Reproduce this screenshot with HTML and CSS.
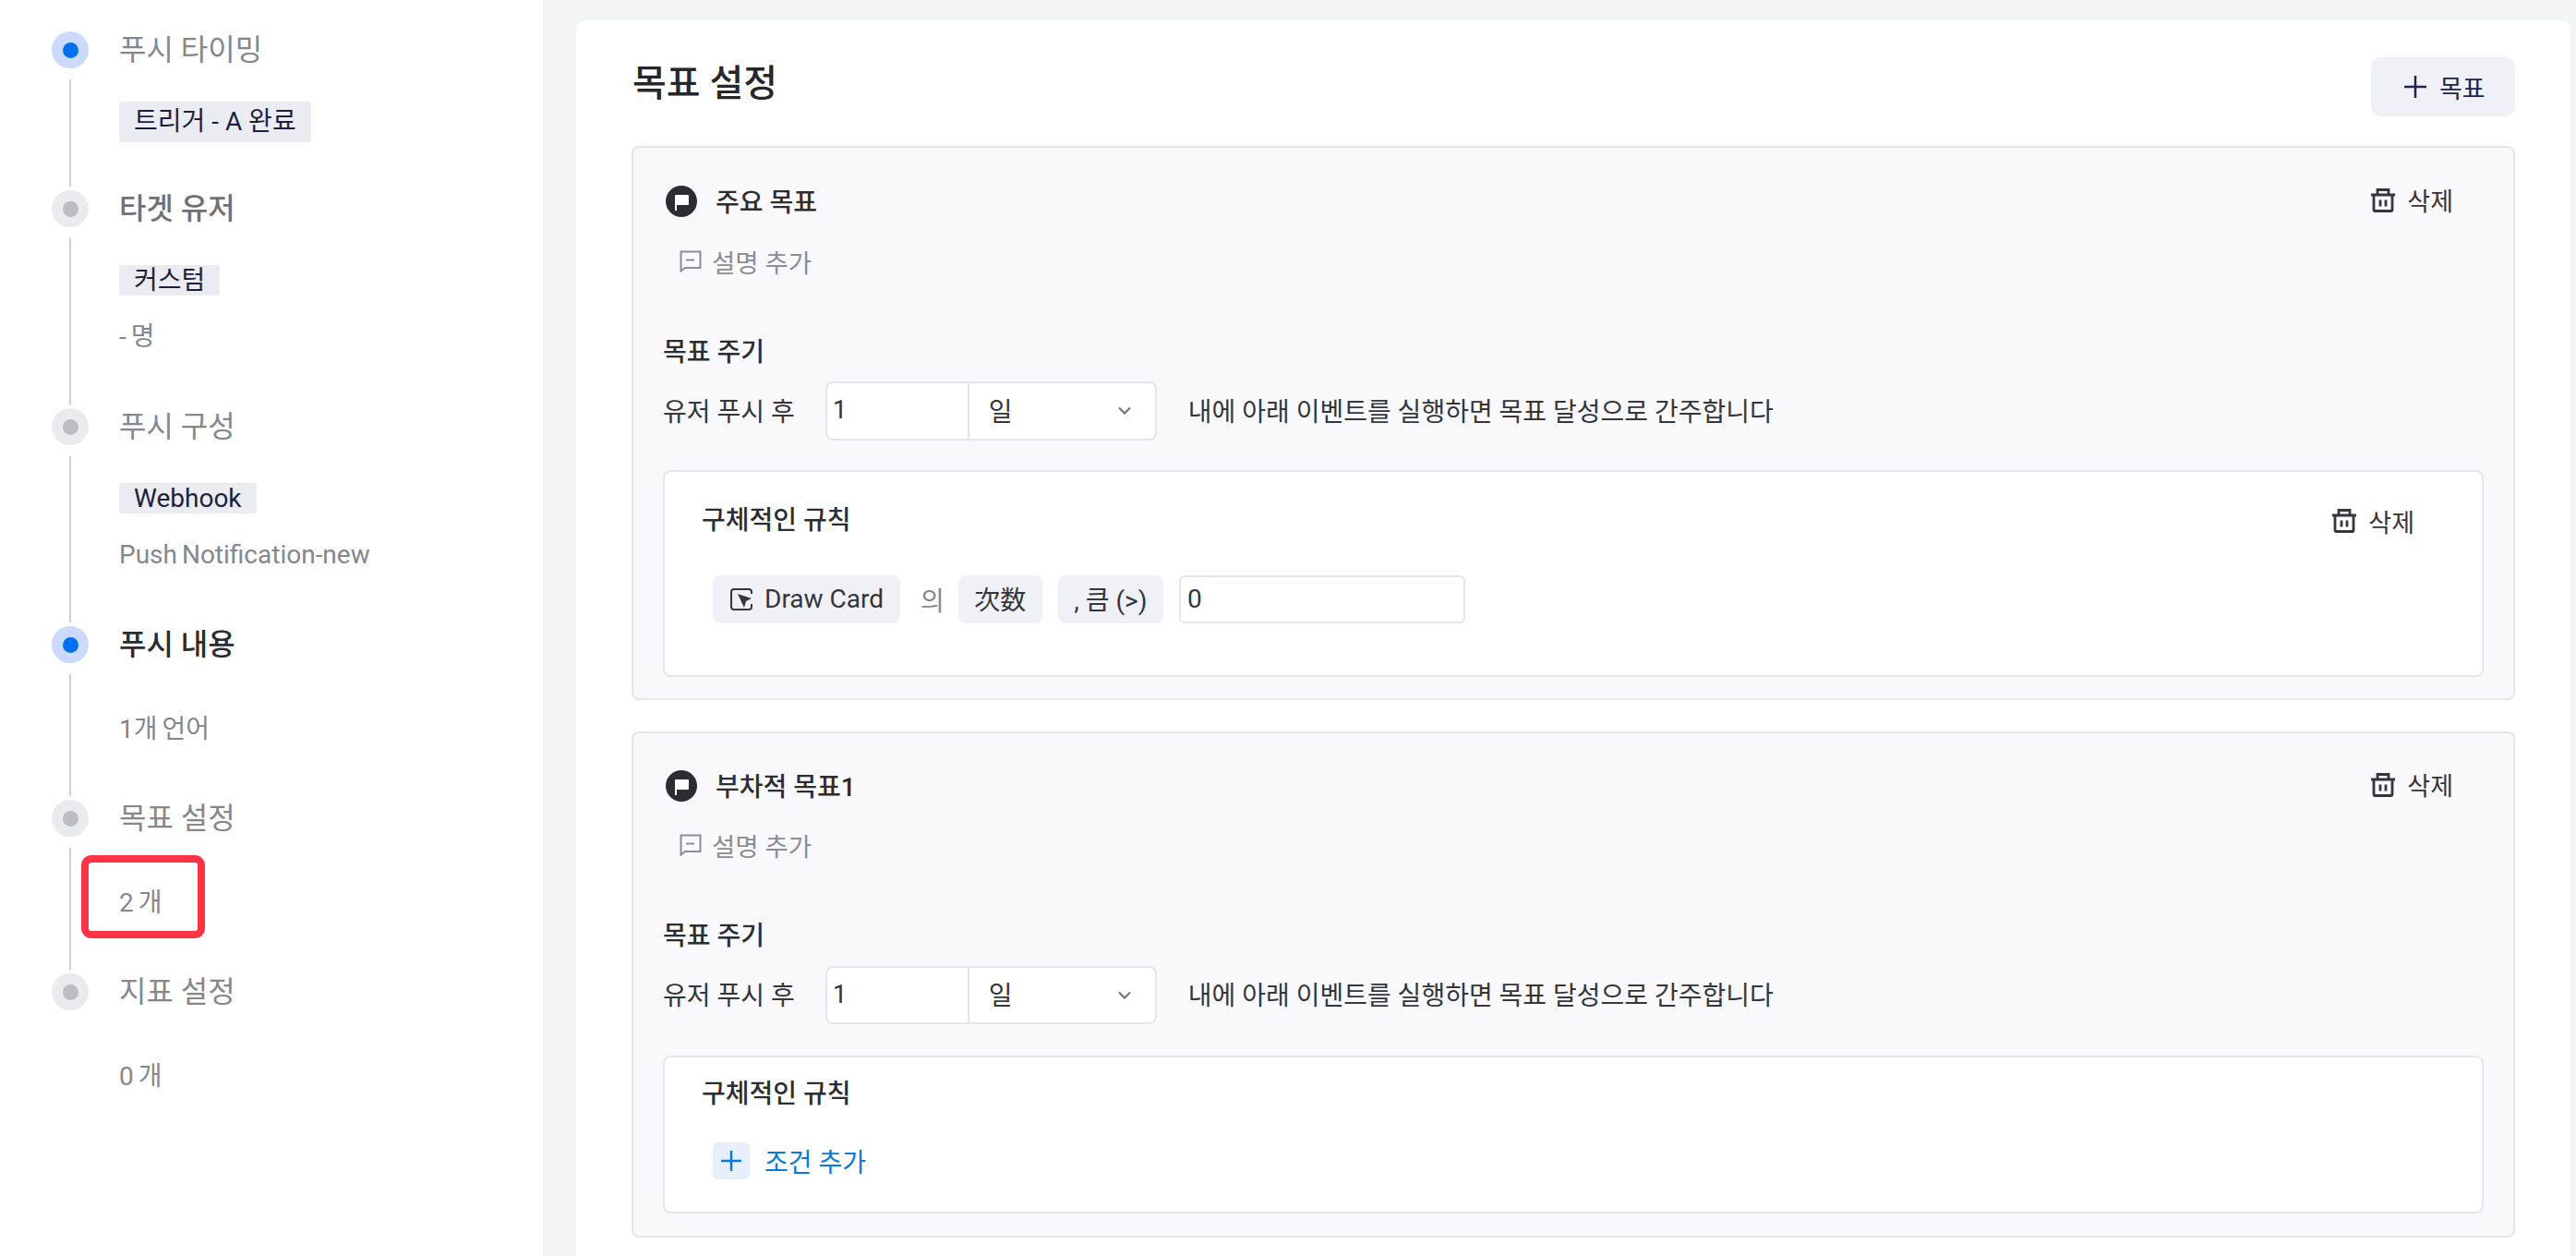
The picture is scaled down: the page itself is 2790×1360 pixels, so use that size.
FILE: index.html
```html
<!DOCTYPE html>
<html lang="ko">
<head>
    <meta charset="UTF-8">
    <title>목표 설정</title>
    <link rel="stylesheet" href="styles.css">
</head>
<body>
    <svg class="icon-defs" width="0" height="0">
        <symbol id="i-flag" viewBox="0 0 34 34">
            <circle cx="17" cy="17" r="17" fill="#2b2d33"/>
            <path d="M10 11q0-1 1-1h13q1 0 1 1v9q0 1-1 1H12v6h-2z" fill="#fff"/>
        </symbol>
        <symbol id="i-comment" viewBox="0 0 24 24">
            <path d="M1.500 1.500h21v17.500H6l-4.500 3.500z" fill="none" stroke="#8b8d93" stroke-width="2"/>
            <path d="M7 10.500h9" fill="none" stroke="#8b8d93" stroke-width="2"/>
        </symbol>
        <symbol id="i-trash" viewBox="0 0 26 26">
            <path d="M0 7h26M7 7V1.500h12V7M3 7v16.500a1 1 0 0 0 1 1h18a1 1 0 0 0 1-1V7M10 12.500v7M16 12.500v7" fill="none" stroke="#34363b" stroke-width="2.800"/>
        </symbol>
        <symbol id="i-chevron" viewBox="0 0 14 10">
            <path d="M1 1.500l6 6 6-6" fill="none" stroke="#6e7076" stroke-width="2"/>
        </symbol>
        <symbol id="i-event" viewBox="0 0 24 24">
            <path d="M23 6V4a3 3 0 0 0-3-3H4a3 3 0 0 0-3 3v16a3 3 0 0 0 3 3h16a3 3 0 0 0 3-3v-3" fill="none" stroke="#34363b" stroke-width="2"/>
            <path d="M8 6l15 5-6 3-2 7z" fill="#34363b"/>
        </symbol>
    </svg>

    <div class="app">
        <aside class="sidebar">
            <div class="step step-first">
                <div class="rail"><span class="dot dot-on"></span><span class="rail-line"></span></div>
                <div>
                    <div class="step-title">푸시 타이밍</div>
                    <span class="tag tag-big">트리거 - A 완료</span>
                </div>
            </div>
            <div class="step step-tall">
                <div class="rail"><span class="dot"></span><span class="rail-line"></span></div>
                <div>
                    <div class="step-title step-title-mid">타겟 유저</div>
                    <span class="tag">커스텀</span>
                    <div class="step-note">- 명</div>
                </div>
            </div>
            <div class="step step-tall">
                <div class="rail"><span class="dot"></span><span class="rail-line"></span></div>
                <div>
                    <div class="step-title">푸시 구성</div>
                    <span class="tag">Webhook</span>
                    <div class="step-note">Push Notification-new</div>
                </div>
            </div>
            <div class="step step-short">
                <div class="rail"><span class="dot dot-on"></span><span class="rail-line"></span></div>
                <div>
                    <div class="step-title step-title-on">푸시 내용</div>
                    <div class="step-note step-note-only">1개 언어</div>
                </div>
            </div>
            <div class="step step-short">
                <div class="rail"><span class="dot"></span><span class="rail-line"></span></div>
                <div>
                    <div class="step-title">목표 설정</div>
                    <div class="step-note step-note-only">2 개</div>
                </div>
            </div>
            <div class="step step-short">
                <div class="rail"><span class="dot"></span></div>
                <div>
                    <div class="step-title">지표 설정</div>
                    <div class="step-note step-note-only">0 개</div>
                </div>
            </div>
        </aside>

        <main class="main">
            <section class="panel">
                <header class="panel-head">
                    <h1 class="panel-title">목표 설정</h1>
                    <button class="add-btn">
                        <svg class="add-plus" viewBox="0 0 24 24"><path d="M0 12h24M12 0v24" fill="none" stroke="#22234a" stroke-width="2.500"/></svg>
                        목표
                    </button>
                </header>

                <div class="goal">
                    <div class="goal-head">
                        <div class="goal-name"><svg class="icon-flag"><use href="#i-flag"/></svg>주요 목표</div>
                        <div class="del"><svg class="icon-trash"><use href="#i-trash"/></svg>삭제</div>
                    </div>
                    <div class="goal-desc"><svg class="icon-comment"><use href="#i-comment"/></svg>설명 추가</div>
                    <div class="label">목표 주기</div>
                    <div class="period">
                        <span>유저 푸시 후</span>
                        <div class="period-group">
                            <input class="period-input" type="text" value="1">
                            <div class="period-select"><span>일</span><svg class="icon-chevron"><use href="#i-chevron"/></svg></div>
                        </div>
                        <span>내에 아래 이벤트를 실행하면 목표 달성으로 간주합니다</span>
                    </div>
                    <div class="rule">
                        <div class="rule-head">
                            <div class="label">구체적인 규칙</div>
                            <div class="del del-rule"><svg class="icon-trash"><use href="#i-trash"/></svg>삭제</div>
                        </div>
                        <div class="rule-row">
                            <span class="pill pill-event"><svg class="icon-event"><use href="#i-event"/></svg>Draw Card</span>
                            <span class="rule-of">의</span>
                            <span class="pill">次数</span>
                            <span class="pill">, 큼 (&gt;)</span>
                            <input class="rule-input" type="text" value="0">
                        </div>
                    </div>
                </div>

                <div class="goal goal-extra">
                    <div class="goal-head">
                        <div class="goal-name"><svg class="icon-flag"><use href="#i-flag"/></svg>부차적 목표1</div>
                        <div class="del"><svg class="icon-trash"><use href="#i-trash"/></svg>삭제</div>
                    </div>
                    <div class="goal-desc"><svg class="icon-comment"><use href="#i-comment"/></svg>설명 추가</div>
                    <div class="label">목표 주기</div>
                    <div class="period">
                        <span>유저 푸시 후</span>
                        <div class="period-group">
                            <input class="period-input" type="text" value="1">
                            <div class="period-select"><span>일</span><svg class="icon-chevron"><use href="#i-chevron"/></svg></div>
                        </div>
                        <span>내에 아래 이벤트를 실행하면 목표 달성으로 간주합니다</span>
                    </div>
                    <div class="rule">
                        <div class="rule-head">
                            <div class="label">구체적인 규칙</div>
                        </div>
                        <div class="rule-add">
                            <span class="rule-add-box"><svg class="rule-add-plus" viewBox="0 0 22 22"><path d="M0 11h22M11 0v22" fill="none" stroke="#0b79d8" stroke-width="2.500"/></svg></span>
                            조건 추가
                        </div>
                    </div>
                </div>
            </section>
        </main>
    </div>

    <div class="callout"></div>
</body>
</html>
```

FILE: styles.css
```css
* {
    box-sizing: border-box;
}
body {
    margin: 0;
    height: 1360px;
    overflow: hidden;
    background: #f3f4f6;
    color: #34363b;
    font-family: Roboto, "Noto Sans CJK KR", sans-serif;
    font-size: 28px;
}
.icon-defs {
    position: absolute;
}
.app {
    display: flex;
    height: 1360px;
}

/* sidebar */
.sidebar {
    flex: 0 0 588px;
    background: #fff;
    padding: 34px 0 0 56px;
}
.step {
    display: flex;
    gap: 33px;
}
.step-first {
    height: 172px;
}
.step-tall {
    height: 236px;
}
.step-short {
    height: 188px;
}
.rail {
    display: flex;
    flex-direction: column;
    align-items: center;
    flex: 0 0 40px;
}
.dot {
    display: flex;
    align-items: center;
    justify-content: center;
    flex: 0 0 40px;
    width: 40px;
    border-radius: 50%;
    background: #eaebef;
}
.dot::after {
    content: "";
    width: 17px;
    height: 17px;
    border-radius: 50%;
    background: #bcbdc2;
}
.dot-on {
    background: #cbd9fb;
}
.dot-on::after {
    background: #0070f3;
}
.rail-line {
    flex: 1;
    width: 2px;
    margin: 12px 0 4px;
    background: #cfd0d3;
}
.step-title {
    height: 40px;
    line-height: 40px;
    font-size: 32px;
    color: #85878c;
}
.step-title-mid {
    font-weight: 500;
    color: #6f7175;
}
.step-title-on {
    font-weight: 500;
    color: #2c2d31;
}
.tag {
    display: inline-block;
    height: 33px;
    line-height: 33px;
    margin-top: 41px;
    padding: 0 16px;
    border-radius: 3px;
    background: #ebecf1;
    color: #1e1f40;
}
.tag-big {
    height: 44px;
    line-height: 44px;
    margin-top: 36px;
}
.step-note {
    height: 40px;
    line-height: 40px;
    margin-top: 25px;
    color: #85878c;
    word-spacing: -2px;
}
.step-note-only {
    margin-top: 52px;
}

/* main panel */
.main {
    flex: 1;
    padding: 22px 6px 0 36px;
}
.panel {
    height: 100%;
    padding: 40px 60px 0;
    border-radius: 10px 10px 0 0;
    background: #fff;
}
.panel-head {
    display: flex;
    justify-content: space-between;
    align-items: flex-start;
    height: 64px;
}
.panel-title {
    margin: 9px 0 0 1px;
    font-size: 40px;
    line-height: 40px;
    font-weight: 500;
    color: #26272b;
}
.add-btn {
    display: flex;
    align-items: center;
    gap: 14px;
    height: 64px;
    width: 156px;
    padding: 0 0 0 36px;
    border: none;
    border-radius: 10px;
    background: #f0f1f7;
    color: #22234a;
    font: inherit;
    font-size: 27px;
}
.add-plus {
    width: 24px;
    height: 24px;
}

.goal {
    height: 600px;
    margin-top: 32px;
    padding: 38px 32px 0;
    border: 2px solid #e5e6ea;
    border-radius: 8px;
    background: #f9f9fb;
}
.goal-extra {
    height: 548px;
    margin-top: 34px;
    padding-top: 37px;
}
.goal-head {
    display: flex;
    justify-content: space-between;
    align-items: center;
    height: 40px;
    padding: 0 33px 3px 3px;
}
.goal-name {
    display: flex;
    align-items: center;
    gap: 20px;
    font-weight: 500;
    color: #2c2d31;
}
.icon-flag {
    width: 34px;
    height: 34px;
    margin-top: 3px;
}
.del {
    display: flex;
    align-items: center;
    gap: 13px;
    font-size: 27px;
}
.del-rule {
    margin-right: 40px;
}
.icon-trash {
    width: 26px;
    height: 26px;
}
.goal-desc {
    display: flex;
    align-items: center;
    gap: 11px;
    height: 40px;
    margin-top: 25px;
    padding-left: 18px;
    color: #8b8d93;
    font-size: 27.500px;
}
.goal-extra .goal-desc {
    margin-top: 24px;
}
.icon-comment {
    width: 24px;
    height: 24px;
}
.label {
    height: 40px;
    line-height: 40px;
    font-weight: 500;
    color: #2c2d31;
}
.goal-desc + .label {
    margin-top: 59px;
}
.period {
    display: flex;
    align-items: center;
    gap: 33px;
    margin-top: 11px;
}
.goal-extra .period {
    margin-top: 12px;
}
.period > span {
    padding-bottom: 3px;
}
.period-group {
    display: flex;
    width: 359px;
    height: 64px;
    margin-right: 1px;
    border: 2px solid #e5e6ea;
    border-radius: 8px;
    background: #fff;
}
.goal-extra .period-group {
    height: 63px;
}
.period-input {
    width: 154px;
    padding: 0 6px 3px;
    border: none;
    border-right: 2px solid #e5e6ea;
    border-radius: 8px 0 0 8px;
    background: transparent;
    color: #34363b;
    font: inherit;
}
.period-select {
    display: flex;
    justify-content: space-between;
    align-items: center;
    flex: 1;
    padding: 0 26px 3px 21px;
}
.icon-chevron {
    width: 14px;
    height: 10px;
    margin-top: 3px;
}

.rule {
    height: 224px;
    margin-top: 32px;
    padding: 33px 33px 0 40px;
    border: 2px solid #e5e6ea;
    border-radius: 8px;
    background: #fff;
}
.goal-extra .rule {
    height: 171px;
    margin-top: 34px;
    padding-top: 20px;
}
.rule-head {
    display: flex;
    justify-content: space-between;
    align-items: center;
}
.rule-row {
    display: flex;
    align-items: center;
    gap: 17px;
    margin-top: 39px;
    padding-left: 12px;
}
.pill {
    display: flex;
    align-items: center;
    height: 52px;
    padding: 0 17.500px 2px;
    border-radius: 8px;
    background: #f0f1f7;
}
.pill-event {
    gap: 13px;
    padding: 0 18px 2px 19px;
}
.icon-event {
    width: 24px;
    height: 24px;
    margin-top: 2px;
}
.rule-of {
    margin: 0 -2px 0 5px;
    color: #85878c;
}
.rule-input {
    width: 310px;
    height: 52px;
    padding: 0 7px 2px;
    border: 2px solid #e5e6ea;
    border-radius: 6px;
    background: #fff;
    color: #34363b;
    font: inherit;
}
.rule-add {
    display: flex;
    align-items: center;
    gap: 16px;
    margin-top: 32px;
    padding-left: 12px;
    height: 40px;
    color: #0b79d8;
}
.rule-add-box {
    display: flex;
    align-items: center;
    justify-content: center;
    width: 40px;
    height: 40px;
    border-radius: 6px;
    background: #e7effc;
}
.rule-add-plus {
    width: 22px;
    height: 22px;
}

/* red annotation drawn over the sidebar */
.callout {
    position: absolute;
    left: 88px;
    top: 926px;
    width: 134px;
    height: 90px;
    border: 8px solid #ff3344;
    border-radius: 11px;
}
```
